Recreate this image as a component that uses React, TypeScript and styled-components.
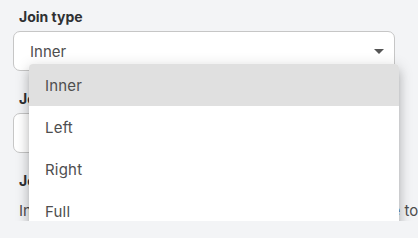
import React from 'react';
import styled, { createGlobalStyle } from 'styled-components';

const GlobalStyle = createGlobalStyle`
	html, body {
		margin: 0;
		padding: 0;
		background: #f3f4f6;
		overflow: hidden;
	}
	body {
		font-family: Inter, 'Noto Sans', sans-serif;
	}
`;

const options = ['Inner', 'Left', 'Right', 'Full'];

export default function App() {
	return (
		<>
			<GlobalStyle />
			<Page>
				<Field>
					<Label>Join type</Label>
					<SelectWrap>
						<SelectBox>
							<span>Inner</span>
							<Caret />
						</SelectBox>
						<Menu>
							{options.map(option => (
								<MenuItem key={option} $active={option === 'Inner'}>
									{option}
								</MenuItem>
							))}
						</Menu>
					</SelectWrap>
				</Field>

				<Field>
					<Label>Join key</Label>
					<SelectBox />
				</Field>

				<Field>
					<Label>Join description</Label>
					<Hint>Inner keeps only rows that match in both tables, close to</Hint>
				</Field>
			</Page>
		</>
	);
}

const Page = styled.div`
	display: flex;
	flex-direction: column;
	gap: 18px;
	padding: 7px 23px 0 13px;
`;

const Field = styled.div`
	display: flex;
	flex-direction: column;
	gap: 4px;
`;

const Label = styled.div`
	font-size: 14px;
	line-height: 20px;
	font-weight: 700;
	color: #2f3033;
	padding-left: 6px;
`;

const SelectWrap = styled.div`
	position: relative;
`;

const SelectBox = styled.div`
	box-sizing: border-box;
	height: 40px;
	display: flex;
	align-items: center;
	justify-content: space-between;
	padding: 0 10px 0 16px;
	background: #fff;
	border: 1px solid #c6c6c6;
	border-radius: 7px;
	font-size: 15px;
	color: #4e4e4e;
`;

const Caret = styled.span`
	width: 0;
	height: 0;
	border-left: 5px solid transparent;
	border-right: 5px solid transparent;
	border-top: 5px solid #555;
`;

const Menu = styled.ul`
	position: absolute;
	top: 33px;
	left: 16px;
	width: 370px;
	margin: 0;
	padding: 0;
	list-style: none;
	background: #fff;
	border-radius: 4px;
	overflow: hidden;
	box-shadow: 0 5px 5px -3px rgba(0, 0, 0, 0.2), 0 8px 10px 1px rgba(0, 0, 0, 0.14),
		0 3px 14px 2px rgba(0, 0, 0, 0.12);
	z-index: 10;
`;

const MenuItem = styled.li<{ $active?: boolean }>`
	height: 42px;
	display: flex;
	align-items: center;
	padding-left: 16px;
	font-size: 15px;
	letter-spacing: 0.2px;
	color: #4e4e4e;
	background: ${props => (props.$active ? '#e0e0e0' : '#fff')};
`;

const Hint = styled.p`
	margin: 6px 0 0;
	padding-left: 6px;
	font-size: 15px;
	line-height: 20px;
	color: #4e4e4e;
	white-space: nowrap;
`;
